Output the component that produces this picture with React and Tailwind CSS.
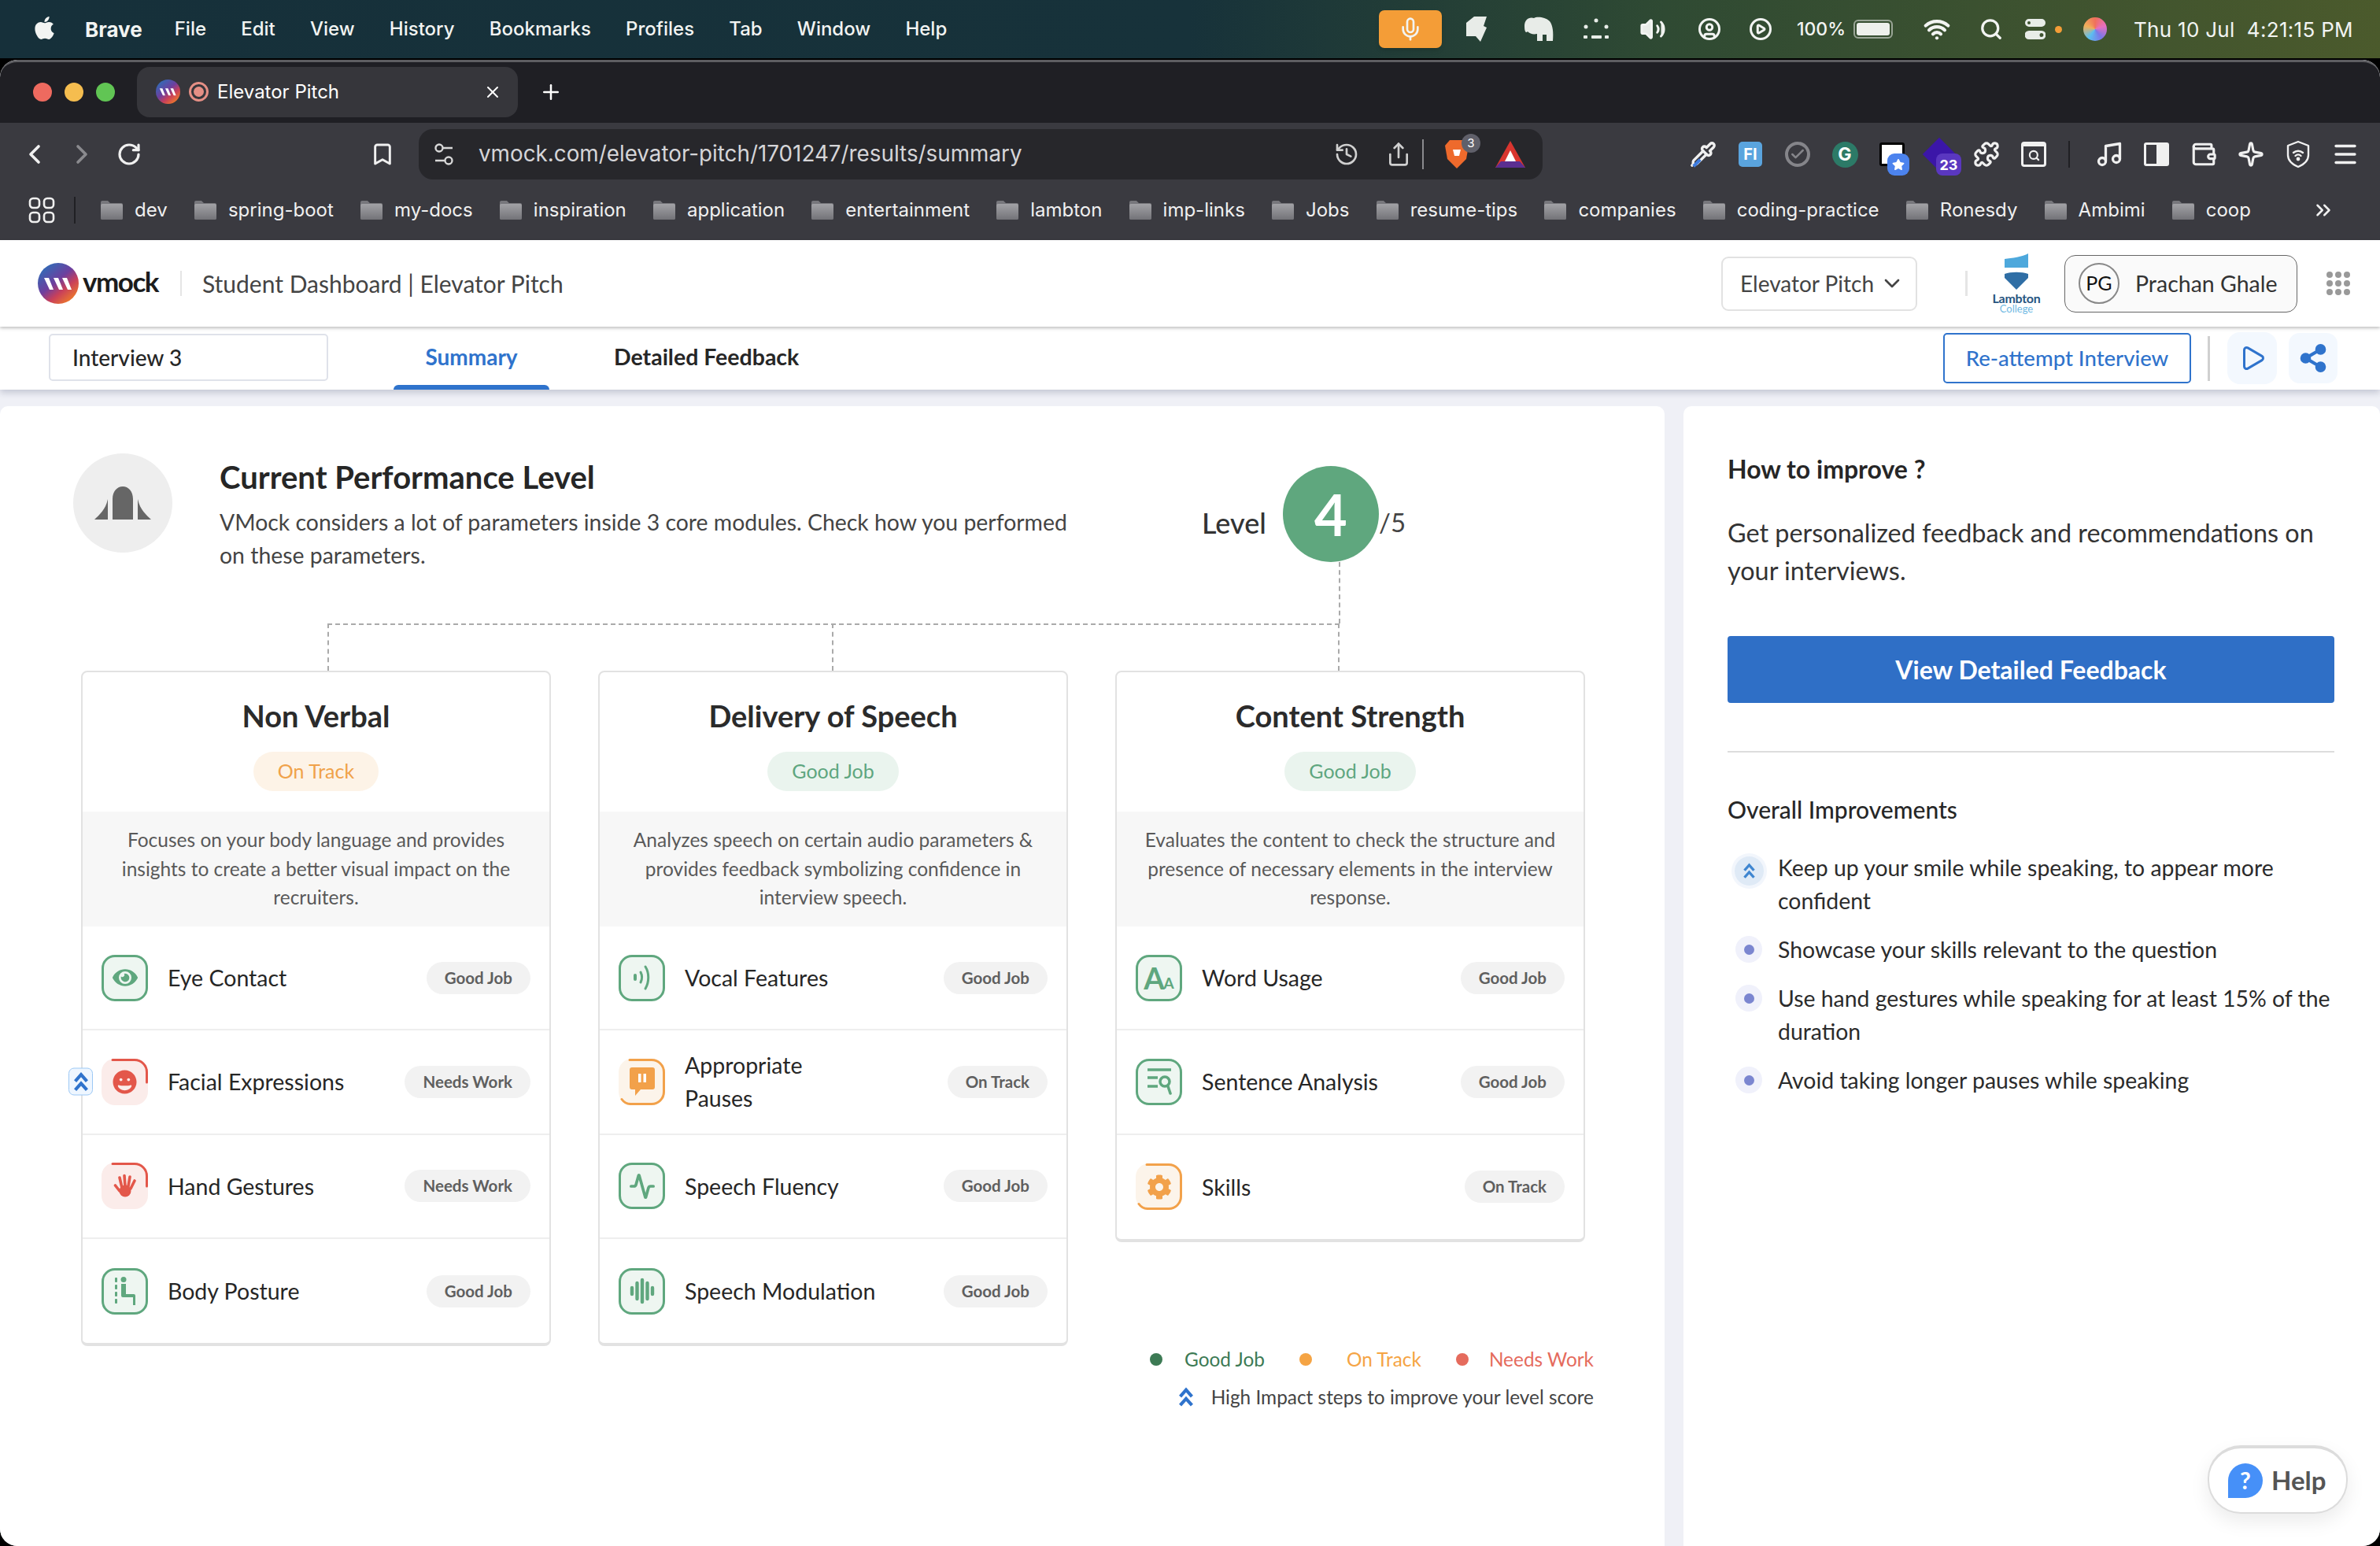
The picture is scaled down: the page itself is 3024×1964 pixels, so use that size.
import {
  Mic, Volume2, CircleUser, CirclePlay, Wifi, Search, ChevronLeft, ChevronRight, RotateCw, Bookmark,
  History, Share, Puzzle, Music, Wallet, Sparkle, Menu, Pipette, ChevronDown, ChevronsRight,
  Activity, Play, Share2, X, Plus, Check,
} from 'lucide-react';
import { FaApple, FaEye, FaGrin, FaCog, FaStar } from 'react-icons/fa';

const uiFont = { fontFamily: 'Lato, "Open Sans", sans-serif' };

const menuItems = ['File', 'Edit', 'View', 'History', 'Bookmarks', 'Profiles', 'Tab', 'Window', 'Help'];

const bookmarks = [
  'dev', 'spring-boot', 'my-docs', 'inspiration', 'application', 'entertainment', 'lambton', 'imp-links',
  'Jobs', 'resume-tips', 'companies', 'coding-practice', 'Ronesdy', 'Ambimi', 'coop',
];

const improvements = [
  { text: 'Keep up your smile while speaking, to appear more confident', high: true },
  { text: 'Showcase your skills relevant to the question' },
  { text: 'Use hand gestures while speaking for at least 15% of the duration' },
  { text: 'Avoid taking longer pauses while speaking' },
];

/* ---------- small drawings ---------- */

const VmockLogo = ({ size = 52 }) => (
  <svg width={size} height={size} viewBox="0 0 52 52">
    <defs>
      <linearGradient id={`vm${size}`} x1="0.1" y1="0.1" x2="0.8" y2="0.95">
        <stop offset="0" stopColor="#2f6db8" />
        <stop offset="0.45" stopColor="#6d3f9e" />
        <stop offset="0.7" stopColor="#c9405a" />
        <stop offset="1" stopColor="#ee7a2a" />
      </linearGradient>
    </defs>
    <circle cx="26" cy="26" r="26" fill={`url(#vm${size})`} />
    <path d="M8 19h6l6 15h-5zM20 19h6l6 15h-5zM31 19h6l6 15h-5z" fill="#fff" />
  </svg>
);

const Folder = () => (
  <svg width="30" height="26" viewBox="0 0 30 26" className="shrink-0">
    <defs>
      <linearGradient id="folderFill" x1="0" y1="0" x2="0" y2="1">
        <stop offset="0" stopColor="#a2a2a6" />
        <stop offset="1" stopColor="#737378" />
      </linearGradient>
    </defs>
    <path d="M1 3a2 2 0 0 1 2-2h7l3 3h14a2 2 0 0 1 2 2v17a2 2 0 0 1-2 2H3a2 2 0 0 1-2-2z" fill="#77777c" />
    <rect x="1" y="5" width="28" height="20" rx="2" fill="url(#folderFill)" />
  </svg>
);

const LambtonLogo = () => (
  <div className="flex flex-col items-center w-[62px] leading-none">
    <svg width="32" height="46" viewBox="0 0 32 46">
      <path d="M1 7C10 6 24 4 31 0v18H1z" fill="#4da8dc" />
      <path d="M1 26c8-3 22-3 30 0v5L16 46 1 31z" fill="#2f6ea5" />
    </svg>
    <span className="text-[16px] font-bold text-[#27557f] mt-[3px] tracking-[-0.3px]">Lambton</span>
    <span className="text-[13px] text-[#6fb9e3] -mt-[1px]">College</span>
  </div>
);

const Trail = ({ d, color }) => (
  <svg className="absolute inset-0" width="59" height="59" viewBox="0 0 59 59" fill="none">
    <path d={d} stroke={color} strokeWidth="3" strokeLinecap="round" />
  </svg>
);

// the coloured tile in front of each parameter
const IconTile = ({ tone, children }) => {
  if (tone === 'good') {
    return (
      <div className="w-[59px] h-[59px] shrink-0 rounded-[17px] border-[3px] border-[#5fa77e] bg-[#eef6f1] text-[#5fa77e] flex items-center justify-center">
        {children}
      </div>
    );
  }
  if (tone === 'track') {
    return (
      <div className="relative w-[59px] h-[59px] shrink-0 rounded-[17px] bg-[#fcf4ea] text-[#f2a14a] flex items-center justify-center">
        <Trail d="M14 1.5h28a15.5 15.5 0 0 1 15.5 15.500v25a15.5 15.5 0 0 1-15.5 15.500H16a14 14 0 0 1-12-6" color="#f2a14a" />
        {children}
      </div>
    );
  }
  return (
    <div className="relative w-[59px] h-[59px] shrink-0 rounded-[17px] bg-[#fbecea] text-[#e3574a] flex items-center justify-center">
      <Trail d="M14 1.5h28a15.5 15.5 0 0 1 15.5 15.500v13" color="#e3574a" />
      {children}
    </div>
  );
};

const HandIcon = () => (
  <svg width="30" height="32" viewBox="0 0 30 32" fill="none" stroke="currentColor" strokeWidth="3.6" strokeLinecap="round">
    <path d="M11 18L8 5M15 16L14 2.500M19 16l2-12M22 19l5-10M8 22L2.500 15" />
    <ellipse cx="15" cy="22" rx="7.500" ry="7.500" fill="currentColor" stroke="none" />
  </svg>
);

const VocalIcon = () => (
  <svg width="24" height="34" viewBox="0 0 24 34" fill="none" stroke="currentColor" strokeLinecap="round">
    <path d="M3 14v5" strokeWidth="4" />
    <path d="M10 10c2 4 2 9 0 13" strokeWidth="3" />
    <path d="M16 3c5 8 5 19 0 28" strokeWidth="3" />
  </svg>
);

const PauseBubble = () => (
  <svg width="32" height="36" viewBox="0 0 32 36">
    <path d="M3 0h26a3 3 0 0 1 3 3v22a3 3 0 0 1-3 3H14l-7 8v-8H3a3 3 0 0 1-3-3V3a3 3 0 0 1 3-3z" fill="currentColor" />
    <rect x="11" y="8" width="3.5" height="11" fill="#fff" />
    <rect x="17.5" y="8" width="3.5" height="11" fill="#fff" />
  </svg>
);

const PostureIcon = () => (
  <svg width="26" height="36" viewBox="0 0 26 36" fill="currentColor">
    <rect x="0" y="1" width="3" height="6" rx="1" />
    <rect x="0" y="10" width="3" height="6" rx="1" />
    <rect x="0" y="19" width="3" height="6" rx="1" />
    <rect x="0" y="28" width="3" height="6" rx="1" />
    <circle cx="11" cy="3.5" r="3.5" />
    <path d="M8 9h6v13h10a2 2 0 0 1 2 2v12h-3V26H10a2 2 0 0 1-2-2z" />
  </svg>
);

const ModulationIcon = () => (
  <svg width="32" height="34" viewBox="0 0 32 34" fill="none" stroke="currentColor" strokeWidth="4.4" strokeLinecap="round">
    <path d="M3 13v8M9.500 7v20M16 3v28M22.500 7v20M29 13v8" />
  </svg>
);

const WordIcon = () => (
  <span className="flex items-end leading-none font-bold" style={uiFont}>
    <span className="text-[38px]">A</span>
    <span className="text-[19px] -ml-[1px] mb-[3px]">A</span>
  </span>
);

const SentenceIcon = () => (
  <svg width="32" height="34" viewBox="0 0 32 34" fill="none" stroke="currentColor" strokeWidth="3.5">
    <path d="M1 2h30" />
    <path d="M1 12h13M1 23h13" />
    <circle cx="23" cy="17" r="6" />
    <path d="M27 23l3 9" strokeLinecap="round" />
  </svg>
);

const Chevrons = ({ className }) => (
  <svg className={className} viewBox="0 0 20 28" fill="none" stroke="currentColor" strokeWidth="4.5">
    <path d="M2 13L10 4l8 9" />
    <path d="M2 25l8-9 8 9" />
  </svg>
);

const ShieldWifi = () => (
  <svg width="34" height="36" viewBox="0 0 34 36" fill="none" stroke="currentColor" strokeWidth="2.4" strokeLinecap="round" strokeLinejoin="round">
    <path d="M17 2l13 5v12c0 7-6 12-13 15C10 31 4 26 4 19V7z" />
    <path d="M11 16a9 9 0 0 1 12 0M13.500 20a5 5 0 0 1 7 0" />
    <circle cx="17" cy="24" r="1.200" fill="currentColor" />
  </svg>
);

/* ---------- parameter cards ---------- */

const cards = [
  {
    title: 'Non Verbal',
    status: 'On Track',
    desc: 'Focuses on your body language and provides insights to create a better visual impact on the recruiters.',
    rows: [
      { name: 'Eye Contact', status: 'Good Job', tone: 'good', icon: <FaEye size={32} /> },
      { name: 'Facial Expressions', status: 'Needs Work', tone: 'work', icon: <FaGrin size={31} />, high: true },
      { name: 'Hand Gestures', status: 'Needs Work', tone: 'work', icon: <HandIcon /> },
      { name: 'Body Posture', status: 'Good Job', tone: 'good', icon: <PostureIcon /> },
    ],
  },
  {
    title: 'Delivery of Speech',
    status: 'Good Job',
    desc: 'Analyzes speech on certain audio parameters & provides feedback symbolizing confidence in interview speech.',
    rows: [
      { name: 'Vocal Features', status: 'Good Job', tone: 'good', icon: <VocalIcon /> },
      { name: 'Appropriate Pauses', status: 'On Track', tone: 'track', icon: <PauseBubble />, narrow: true },
      { name: 'Speech Fluency', status: 'Good Job', tone: 'good', icon: <Activity size={34} strokeWidth={2.6} /> },
      { name: 'Speech Modulation', status: 'Good Job', tone: 'good', icon: <ModulationIcon /> },
    ],
  },
  {
    title: 'Content Strength',
    status: 'Good Job',
    desc: 'Evaluates the content to check the structure and presence of necessary elements in the interview response.',
    rows: [
      { name: 'Word Usage', status: 'Good Job', tone: 'good', icon: <WordIcon /> },
      { name: 'Sentence Analysis', status: 'Good Job', tone: 'good', icon: <SentenceIcon /> },
      { name: 'Skills', status: 'On Track', tone: 'track', icon: <FaCog size={32} /> },
    ],
  },
];

const ParamRow = ({ row, last }) => (
  <div className={`relative h-[132.3px] flex items-center px-[24px] ${last ? '' : 'border-b-2 border-[#eeeeee]'}`}>
    {row.high && (
      <div className="absolute -left-[18px] top-1/2 -translate-y-1/2 w-[31px] h-[35px] rounded-[7px] border border-[#9cc8f5] bg-[#eef6ff] text-[#2f73cc] flex items-center justify-center">
        <Chevrons className="w-[20px] h-[26px]" />
      </div>
    )}
    <IconTile tone={row.tone}>{row.icon}</IconTile>
    <span className={`ml-[25px] text-[28.5px] leading-[42px] text-[#262626] ${row.narrow ? 'w-[200px]' : ''}`}>{row.name}</span>
    <span className="ml-auto h-[41px] px-[23px] rounded-full bg-[#f2f2f2] text-[#5f5f5f] text-[20.5px] font-bold flex items-center">
      {row.status}
    </span>
  </div>
);

const ParamCard = ({ card }) => (
  <div className="w-[597px] rounded-[8px] border-2 border-b-[4px] border-[#e2e2e2] bg-white">
    <div className="h-[177px] flex flex-col items-center pt-[33px]">
      <h3 className="text-[38px] leading-[44px] font-bold text-[#2b2b2b]">{card.title}</h3>
      <span
        className={`mt-[24px] h-[50px] px-[31px] rounded-full text-[25px] flex items-center ${
          card.status === 'On Track' ? 'bg-[#fdf3e7] text-[#f0a24a]' : 'bg-[#eaf4ee] text-[#5ea67f]'
        }`}
      >
        {card.status}
      </span>
    </div>
    <p className="h-[146px] bg-[#f7f7f7] px-[30px] pt-[18px] text-center text-[24.5px] leading-[36.6px] text-[#595959]">{card.desc}</p>
    {card.rows.map((row, i) => (
      <ParamRow key={row.name} row={row} last={i === card.rows.length - 1} />
    ))}
  </div>
);

/* ---------- browser chrome ---------- */

const MenuBar = () => (
  <div
    className="h-[74px] flex items-center text-[#f2f4f2] bg-[linear-gradient(90deg,#16303a_0%,#17323a_50%,#2f4a33_70%,#4b5a2c_100%)]"
    style={{ fontFamily: 'Inter, sans-serif' }}
  >
    <FaApple size={33} className="ml-[40px] -mt-[3px] shrink-0" />
    <span className="ml-[35px] text-[26px] font-bold">Brave</span>
    <div className="ml-[41px] flex gap-[44.2px] text-[24px] font-medium">
      {menuItems.map((m) => (
        <span key={m}>{m}</span>
      ))}
    </div>
    <div className="ml-auto flex items-center pr-[34px]">
      <div className="w-[80px] h-[48px] rounded-[7px] bg-[#f49d37] flex items-center justify-center shadow-md">
        <Mic size={32} />
      </div>
      <div className="ml-[9px] w-[72px] flex justify-center">
        <svg width="28" height="32" viewBox="0 0 28 32" fill="#e8ece8"><path d="M10 0h16l-4 12 4 2-8 18-6-7H0V8z" /></svg>
      </div>
      <div className="w-[84px] flex justify-center">
        <svg width="40" height="32" viewBox="0 0 40 32" fill="#e8ece8"><path d="M2 12C2 4 8 0 14 2c3-2 14-2 20 4 4 5 5 14 4 25h-8v-8h-5v8h-7v-9c-5 1-9 0-12-3-2 2-4 1-4-7z" /></svg>
      </div>
      <div className="w-[62px] flex justify-center">
        <svg width="36" height="28" viewBox="0 0 36 28" fill="#e8ece8">
          <circle cx="18" cy="3" r="2.5" /><circle cx="5" cy="11" r="2.5" /><circle cx="31" cy="11" r="2.5" />
          <rect x="2" y="22" width="5" height="4" rx="1" /><rect x="12" y="22" width="13" height="4" rx="1" /><rect x="29" y="22" width="5" height="4" rx="1" />
        </svg>
      </div>
      <div className="w-[82px] flex justify-center"><Volume2 size={34} fill="#e8ece8" /></div>
      <div className="w-[62px] flex justify-center"><CircleUser size={30} strokeWidth={2.4} /></div>
      <div className="w-[68px] flex justify-center"><CirclePlay size={30} strokeWidth={2.4} /></div>
      <span className="ml-[12px] text-[23px] font-medium">100%</span>
      <div className="ml-[10px] w-[50px] h-[24px] rounded-[6px] border-2 border-[#9aa596] p-[2px]">
        <div className="w-full h-full rounded-[3px] bg-[#eef0ec]" />
      </div>
      <div className="ml-[24px] w-[64px] flex justify-center"><Wifi size={34} strokeWidth={3} /></div>
      <div className="ml-[5px] w-[64px] flex justify-center"><Search size={30} strokeWidth={2.6} /></div>
      <div className="w-[48px] flex justify-center">
        <svg width="26" height="26" viewBox="0 0 26 26" fill="#e8ece8">
          <path fillRule="evenodd" d="M5 0h16a5 5 0 0 1 0 10H5A5 5 0 0 1 5 0zm0 3a2 2 0 1 0 0 4 2 2 0 0 0 0-4zM5 15h16a5 5 0 0 1 0 11H5a5 5 0 0 1 0-11zm16 3a2.500 2.500 0 1 0 0 5 2.500 2.500 0 0 0 0-5z" />
        </svg>
      </div>
      <span className="w-[9px] h-[9px] rounded-full bg-[#f49d37] ml-[1px]" />
      <div className="ml-[27px] w-[30px] h-[30px] rounded-full bg-[conic-gradient(#f0705a,#e86fc0,#7a78e8,#5bc0f0,#f0b05a,#f0705a)]" />
      <span className="ml-[34px] text-[26px] w-[279px] whitespace-nowrap tracking-[0.3px]">Thu 10 Jul&nbsp;&nbsp;4:21:15 PM</span>
    </div>
  </div>
);

const TabStrip = () => (
  <div className="h-[80px] pb-[2px] bg-[#1f1f24] border-t-[3px] border-[#5e5e62] rounded-t-[22px] flex items-center pl-[42px]" style={{ fontFamily: 'Inter, sans-serif' }}>
    <div className="flex gap-[16px]">
      <span className="w-[24px] h-[24px] rounded-full bg-[#ee6a5f]" />
      <span className="w-[24px] h-[24px] rounded-full bg-[#f5bd4f]" />
      <span className="w-[24px] h-[24px] rounded-full bg-[#61c554]" />
    </div>
    <div className="ml-[28px] w-[484px] h-[64px] rounded-[16px] bg-[#36363b] flex items-center pl-[24px] text-white">
      <VmockLogo size={31} />
      <span className="ml-[11px] w-[25px] h-[25px] rounded-full border-[3px] border-[#e58f85] flex items-center justify-center">
        <span className="w-[13px] h-[13px] rounded-full bg-[#e58f85]" />
      </span>
      <span className="ml-[11px] text-[24px]">Elevator Pitch</span>
      <X size={24} className="ml-auto mr-[20px]" />
    </div>
    <Plus size={30} className="ml-[27px] text-white" />
  </div>
);

const Cell = ({ children }) => <div className="relative w-[60px] flex justify-center text-[#f0f0f0]">{children}</div>;

const Toolbar = () => (
  <div className="bg-[#3a3a40] h-[149px]" style={{ fontFamily: 'Inter, sans-serif' }}>
    <div className="h-[72px] pt-[8px] flex items-center pl-[14px]">
      <Cell><ChevronLeft size={40} strokeWidth={2.2} /></Cell>
      <div className="w-[60px] flex justify-center text-[#8a8a8e]"><ChevronRight size={40} strokeWidth={2.2} /></div>
      <Cell><RotateCw size={32} strokeWidth={2.4} /></Cell>
      <div className="ml-[262px]"><Cell><Bookmark size={32} strokeWidth={2.2} /></Cell></div>
      <div className="ml-[16px] w-[1428px] h-[64px] rounded-[18px] bg-[#27272b] flex items-center pl-[20px] pr-[22px]">
        <svg width="24" height="30" viewBox="0 0 24 30" fill="none" stroke="#d8d8d8" strokeWidth="2.4">
          <circle cx="6" cy="7" r="4.500" /><path d="M11 7h12" /><circle cx="18" cy="23" r="4.500" /><path d="M1 23h12" />
        </svg>
        <span className="ml-[32px] text-[27.8px] text-[#d5d5d8]">vmock.com/elevator-pitch/1701247/results/summary</span>
        <History size={32} strokeWidth={2} className="ml-auto mr-[34px] text-[#d0d0d0]" />
        <Share size={32} strokeWidth={2} className="mr-[14px] text-[#d0d0d0]" />
        <span className="w-[2px] h-[38px] bg-[#8a8a8e]" />
        <div className="relative ml-[27px]">
          <svg width="30" height="36" viewBox="0 0 30 36"><path d="M6 0h18l6 7-3 17-12 12L3 24 0 7z" fill="#ee6a2c" /><path d="M10 12h10l-2 8h-6z" fill="#fff" /></svg>
          <span className="absolute -top-[8px] -right-[15px] w-[24px] h-[24px] rounded-full bg-[#60606a] text-white text-[15px] flex items-center justify-center">3</span>
        </div>
        <svg className="ml-[34px]" width="38" height="34" viewBox="0 0 38 34">
          <path d="M19 0l19 34H0z" fill="#d9352f" /><path d="M19 12l7 14H12z" fill="#fff" /><path d="M0 34l7-8h24l7 8z" fill="#5a2e90" />
        </svg>
      </div>
      <div className="ml-[174px] flex items-center">
        <Cell>
          <span className="relative flex">
            <Pipette size={34} strokeWidth={2.4} />
            <span className="absolute left-[3px] bottom-[4px] w-[12px] h-[4px] -rotate-45 bg-[#3d7be0]" />
          </span>
        </Cell>
        <Cell><span className="w-[30px] h-[32px] rounded-[5px] bg-[#5aa4de] text-white text-[20px] font-bold flex items-center justify-center">FI</span></Cell>
        <Cell>
          <span className="w-[32px] h-[32px] rounded-full border-[4px] border-[#85858a] text-[#85858a] flex items-center justify-center"><Check size={20} strokeWidth={3} /></span>
        </Cell>
        <Cell><span className="w-[33px] h-[33px] rounded-full bg-[#2c7a67] text-white text-[23px] font-bold flex items-center justify-center">G</span></Cell>
        <Cell>
          <span className="w-[32px] h-[30px] rounded-[3px] border-[3px] border-black bg-white" />
          <span className="absolute left-[24px] top-[14px] w-[28px] h-[28px] rounded-[9px] bg-[#4c83ee] text-white flex items-center justify-center"><FaStar size={16} /></span>
        </Cell>
        <Cell>
          <span className="w-[30px] h-[30px] rotate-45 bg-[#3b16a8]" />
          <span className="absolute left-[26px] top-[14px] w-[32px] h-[28px] rounded-[8px] bg-[#5a37c0] text-white text-[18px] font-bold flex items-center justify-center">23</span>
        </Cell>
        <Cell><Puzzle size={34} strokeWidth={2.2} /></Cell>
        <Cell>
          <span className="w-[32px] h-[32px] rounded-[4px] border-[3px] border-[#f0f0f0] border-t-[6px] flex items-center justify-center"><Search size={15} strokeWidth={3.5} /></span>
        </Cell>
        <span className="ml-[14px] w-[2px] h-[34px] bg-[#202024]" />
        <div className="ml-[20px] flex items-center">
          <Cell><Music size={36} strokeWidth={2.2} /></Cell>
          <Cell>
            <span className="w-[32px] h-[30px] rounded-[3px] border-[3px] border-[#f0f0f0] flex justify-end"><span className="w-[13px] bg-[#f0f0f0]" /></span>
          </Cell>
          <Cell><Wallet size={34} strokeWidth={2.2} /></Cell>
          <Cell><Sparkle size={34} strokeWidth={2.2} /></Cell>
          <Cell><ShieldWifi /></Cell>
          <Cell><Menu size={36} strokeWidth={2.2} /></Cell>
        </div>
      </div>
    </div>
    <div className="h-[77px] flex items-center pl-[36px] text-[24px] text-[#f0f0f0]">
      <svg width="34" height="34" viewBox="0 0 34 34" fill="none" stroke="#f0f0f0" strokeWidth="2.6">
        <rect x="2" y="2" width="12" height="12" rx="4" /><rect x="20" y="2" width="12" height="12" rx="4" />
        <rect x="2" y="20" width="12" height="12" rx="4" /><rect x="20" y="20" width="12" height="12" rx="4" />
      </svg>
      <span className="ml-[24px] w-[2px] h-[34px] bg-[#202024]" />
      <div className="ml-[31px] flex items-center gap-[33.2px] whitespace-nowrap">
        {bookmarks.map((b) => (
          <div key={b} className="flex items-center gap-[14px]">
            <Folder />
            <span>{b}</span>
          </div>
        ))}
      </div>
      <ChevronsRight size={30} className="ml-auto mr-[57px]" />
    </div>
  </div>
);

/* ---------- page ---------- */

const PageHeader = () => (
  <div className="h-[110px] flex items-center pl-[48px] pr-[38px] bg-white shadow-[0_2px_4px_rgba(0,0,0,0.25)] relative z-10">
    <VmockLogo />
    <span className="ml-[5px] text-[35px] font-bold tracking-[-1.5px] text-[#1c1c1c] -mt-[6px]">vmock</span>
    <span className="ml-[28px] w-[2px] h-[32px] bg-[#e5e5e5]" />
    <span className="ml-[26px] text-[30px] text-[#444444]">Student Dashboard | Elevator Pitch</span>
    <div className="ml-auto w-[249px] h-[69px] rounded-[9px] border-2 border-[#e2e2e2] flex items-center justify-between pl-[22px] pr-[14px] text-[28px] text-[#444444]">
      Elevator Pitch
      <ChevronDown size={32} strokeWidth={2} />
    </div>
    <span className="ml-[61px] w-[3px] h-[32px] bg-[#e5e5e5]" />
    <div className="ml-[31px]"><LambtonLogo /></div>
    <div className="ml-[30px] w-[296px] h-[73px] rounded-[14px] border border-[#666666] bg-[#fafafa] flex items-center pl-[17px]">
      <span className="w-[52px] h-[52px] rounded-full border-2 border-[#888888] flex items-center justify-center text-[25px] text-[#111111]">PG</span>
      <span className="ml-[20px] text-[28.5px] text-[#333333]">Prachan Ghale</span>
    </div>
    <div className="ml-[37px] grid grid-cols-3 gap-[3px]">
      {[0, 1, 2, 3, 4, 5, 6, 7, 8].map((n) => (
        <span key={n} className="w-[8px] h-[8px] rounded-full bg-[#999999]" />
      ))}
    </div>
  </div>
);

const SubNav = () => (
  <div className="h-[80px] flex items-center pl-[62px] pr-[54px] bg-white shadow-[0_4px_8px_rgba(30,40,80,0.2)] relative">
    <div className="-mt-[2px] w-[355px] h-[60px] rounded-[5px] border-2 border-[#dfe2ea] flex items-center pl-[28px] text-[28px] font-medium text-[#262626]">Interview 3</div>
    <div className="relative ml-[83px] w-[198px] h-full pb-[4px] flex items-center justify-center text-[28px] font-bold text-[#2f73cc]">
      Summary
      <span className="absolute left-0 right-0 bottom-0 h-[6px] rounded-t-[6px] bg-[#2f73cc]" />
    </div>
    <span className="ml-[82px] -mt-[4px] text-[28.5px] font-bold text-[#262626]">Detailed Feedback</span>
    <button className="ml-auto w-[315px] h-[64px] rounded-[5px] border-2 border-[#2f73cc] text-[27.5px] font-medium text-[#2f73cc]">Re-attempt Interview</button>
    <span className="ml-[21px] w-[3px] h-[57px] bg-[#d0d0d0]" />
    <div className="ml-[22px] w-[63px] h-[66px] rounded-[16px] bg-[#f3f8fe] flex items-center justify-center text-[#2f73cc]">
      <Play size={36} strokeWidth={2} />
    </div>
    <div className="ml-[15px] w-[62px] h-[64px] rounded-[14px] bg-[#f3f8fe] flex items-center justify-center text-[#2f73cc]">
      <Share2 size={38} strokeWidth={2.6} fill="#2f73cc" />
    </div>
  </div>
);

const Legend = () => (
  <div className="-mt-[1px] pr-[90px] flex flex-col items-end text-[24.4px]">
    <div className="flex items-center h-[36px]">
      <span className="w-[16px] h-[16px] rounded-full bg-[#3c7a54]" />
      <span className="ml-[28px] text-[#3c7a54]">Good Job</span>
      <span className="ml-[44px] w-[16px] h-[16px] rounded-full bg-[#f5a444]" />
      <span className="ml-[44px] text-[#f5a444]">On Track</span>
      <span className="ml-[44px] w-[16px] h-[16px] rounded-full bg-[#e56b5d]" />
      <span className="ml-[26px] text-[#e56b5d]">Needs Work</span>
    </div>
    <div className="flex items-center h-[36px] mt-[12px] text-[#444444]">
      <Chevrons className="w-[20px] h-[26px] text-[#2f73cc]" />
      <span className="ml-[22px]">High Impact steps to improve your level score</span>
    </div>
  </div>
);

const PerformancePanel = () => (
  <div className="w-[2115px] rounded-t-[10px] bg-white pt-[60px]">
    <div className="h-[216px] flex items-start pl-[93px]">
      <div className="w-[126px] h-[126px] shrink-0 rounded-full bg-[#eeeeee] flex items-center justify-center">
        <svg width="72" height="42" viewBox="0 0 72 42" fill="#666666">
          <path d="M0 42C6 36 14 30 17 16v26zM55 16c3 14 11 20 17 26H55zM23 42V16C23 6 29 0 36 0s13 6 13 16v26z" />
        </svg>
      </div>
      <div className="ml-[60px] w-[1100px]">
        <h1 className="text-[40px] leading-[60px] font-bold text-[#262626]">Current Performance Level</h1>
        <p className="mt-[6px] text-[28.4px] leading-[42px] text-[#444444] w-[1090px]">
          VMock considers a lot of parameters inside 3 core modules. Check how you performed on these parameters.
        </p>
      </div>
      <div className="ml-[148px] mt-[16px] flex items-center h-[122px]">
        <span className="mt-[22px] w-[103px] text-[36px] font-medium text-[#333333]">Level</span>
        <div className="relative w-[122px] h-[122px] rounded-full bg-[#5fa77e] flex items-center justify-center text-white text-[72px] font-bold">
          4
          <span className="absolute left-[71px] top-full h-[78px] border-l-2 border-dashed border-[#aaaaaa]" />
        </div>
        <span className="mt-[22px] text-[33px] text-[#444444]">/5</span>
      </div>
    </div>
    <div className="relative ml-[416px] w-[1286px] h-[60px] border-2 border-b-0 border-dashed border-[#aaaaaa]">
      <span className="absolute left-[639px] -top-[2px] bottom-0 border-l-2 border-dashed border-[#aaaaaa]" />
    </div>
    <div className="flex items-start gap-[60px] pl-[103px]">
      {cards.map((c) => (
        <ParamCard key={c.title} card={c} />
      ))}
    </div>
    <Legend />
  </div>
);

const ImprovePanel = () => (
  <div className="w-[885px] rounded-t-[10px] bg-white pl-[56px] pr-[58px] pt-[60px] text-[#262626]">
    <h2 className="text-[32px] leading-[40px] font-bold">How to improve ?</h2>
    <p className="mt-[37px] text-[32.4px] leading-[48px] text-[#333333]">Get personalized feedback and recommendations on your interviews.</p>
    <button className="mt-[59px] w-full h-[85px] rounded-[4px] bg-[#2f6fc6] text-white text-[32px] font-bold">View Detailed Feedback</button>
    <div className="mt-[61px] h-[2px] bg-[#dddddd]" />
    <h3 className="mt-[52px] text-[30px] leading-[40px] font-medium">Overall Improvements</h3>
    <ul className="mt-[33px] flex flex-col gap-[20px]">
      {improvements.map((item) => (
        <li key={item.text} className="flex items-start">
          <span className="w-[64px] h-[42px] pr-[10px] shrink-0 flex items-center justify-center">
            {item.high ? (
              <span className="mt-[8px] w-[45px] h-[45px] shrink-0 rounded-full bg-[#f2f6fc] flex items-center justify-center">
                <span className="w-[37px] h-[37px] rounded-full bg-[#dfeaf6] flex items-center justify-center text-[#3f86d0]">
                  <Chevrons className="w-[17px] h-[21px]" />
                </span>
              </span>
            ) : (
              <span className="w-[34px] h-[34px] shrink-0 rounded-full bg-[#f0f1fb] flex items-center justify-center">
                <span className="w-[13px] h-[13px] rounded-full bg-[#7b86d0]" />
              </span>
            )}
          </span>
          <span className="text-[28.4px] leading-[42px] text-[#2b2b2b]">{item.text}</span>
        </li>
      ))}
    </ul>
  </div>
);

const App = () => (
  <div className="relative w-[3024px] h-[1964px] overflow-hidden bg-black">
    <MenuBar />
    <div className="mt-[2px] h-[1888px] rounded-[22px] overflow-hidden bg-[#eff0f6]">
      <TabStrip />
      <Toolbar />
      <div style={uiFont}>
        <PageHeader />
        <SubNav />
        <div className="mt-[21px] flex gap-[24px] h-[1449px] overflow-hidden">
          <PerformancePanel />
          <ImprovePanel />
        </div>
      </div>
    </div>
    {/* floating help */}
    <div className="absolute left-[2805px] top-[1836px] w-[178px] h-[87px] rounded-[42px] border-2 border-t-[4px] border-[#dcdcdc] bg-white shadow-[0_10px_24px_rgba(0,0,0,0.08)] flex items-center pl-[24px]" style={uiFont}>
      <span className="w-[44px] h-[44px] rounded-full rounded-bl-none bg-[#4690f8] flex items-center justify-center text-white text-[30px] font-bold">?</span>
      <span className="ml-[11px] text-[33px] font-bold text-[#555555]">Help</span>
    </div>
  </div>
);

export default App;
